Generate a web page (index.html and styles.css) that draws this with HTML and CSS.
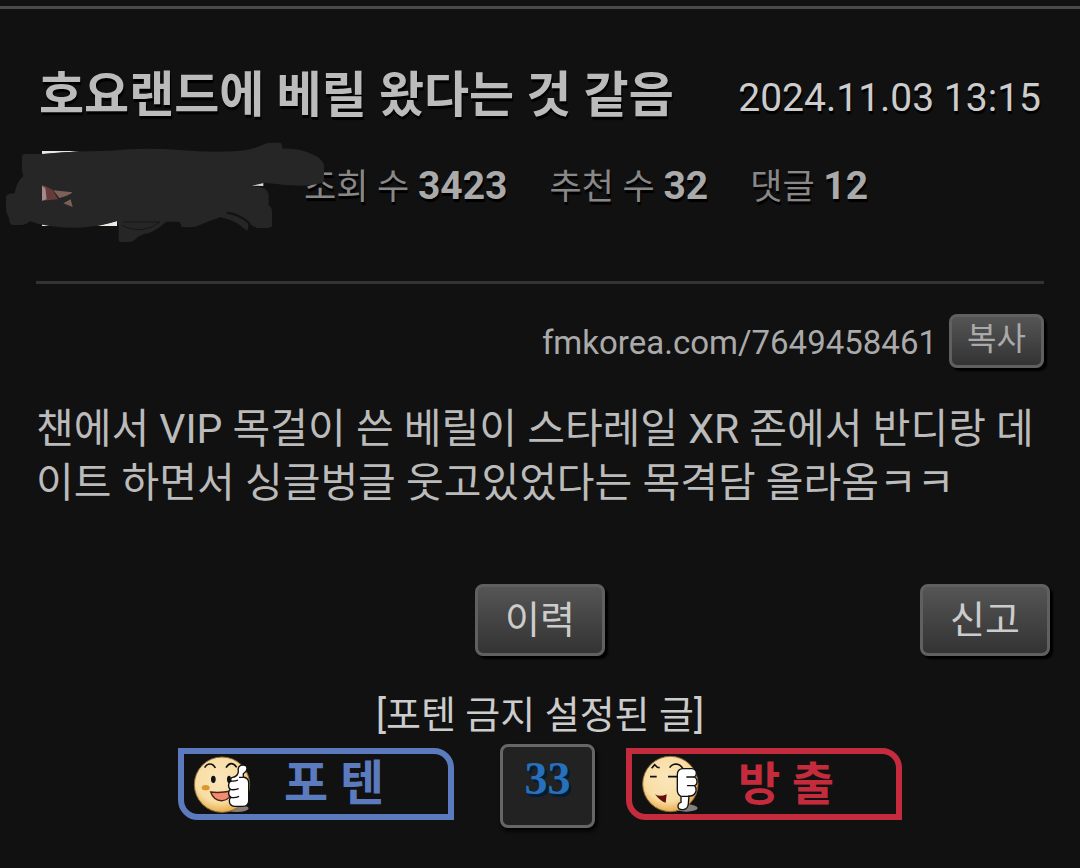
FILE: index.html
```html
<!DOCTYPE html>
<html lang="ko">
<head>
    <meta charset="UTF-8">
    <meta name="viewport" content="width=device-width, initial-scale=1.0">
    <title>호요랜드에 베릴 왔다는 것 같음</title>
    <link rel="stylesheet" href="styles.css">
</head>
<body>
    <article class="post">
        <header class="post-header">
            <div class="title-row">
                <h1>호요랜드에 베릴 왔다는 것 같음</h1>
                <time datetime="2024-11-03T13:15">2024.11.03 13:15</time>
            </div>
            <div class="meta">
                <span>조회 수 <b>3423</b></span>
                <span>추천 수 <b>32</b></span>
                <span>댓글 <b>12</b></span>
                <svg class="scribble" viewBox="0 0 1020 360" aria-hidden="true">
                    <path fill="#e4eaec" d="M126 63H240L180 69L126 73z"/>
                    <path fill="#efeae4" d="M126 283H150V288H126zM290 288L351 273V288z"/>
                    <path fill="#d8d8d8" d="M755 167L775 158H790V168z"/>
                    <path fill="#262626" d="M66 80Q66 72 76 72H126Q190 64 330 62Q430 52 540 60Q620 68 700 64Q750 62 780 48Q800 38 812 38H840Q847 38 847 56Q900 54 940 74Q966 86 972 104V156Q960 164 910 167Q850 166 795 158L755 167L790 174Q806 180 806 200V228Q816 230 816 245V288Q812 294 795 294H772Q760 290 745 278Q746 294 742 302Q730 296 720 286Q695 268 660 262Q620 276 590 289Q570 294 545 290L540 277Q515 272 498 276Q460 310 432 312L414 320Q400 336 388 336H360Q354 332 356 322V288L351 273Q310 288 240 293Q150 296 90 274Q80 284 66 285H36Q28 282 26 262Q18 250 18 235V200Q20 190 44 190Q48 158 70 138Q66 130 66 118z"/>
                    <path fill="none" stroke="#161616" stroke-width="3" d="M366 285Q385 299 425 299Q455 296 480 276H370"/>
                    <path fill="none" stroke="#131313" stroke-width="7" d="M680 248Q720 253 750 282"/>
                    <path fill="#653c3a" d="M126 164Q142 170 158 180L174 208L126 212z"/>
                    <path fill="#a08c8b" d="M126 168L136 174L140 208L126 212z"/>
                    <path fill="#7d6159" d="M160 181L218 187Q205 198 178 204zM190 220L212 208L218 231z"/>
                </svg>
            </div>
        </header>

        <div class="link-row">
            <a href="https://fmkorea.com/7649458461">fmkorea.com/7649458461</a>
            <button class="btn btn-copy" type="button">복사</button>
        </div>

        <p class="content">챈에서 VIP 목걸이 쓴 베릴이 스타레일 XR 존에서 반디랑 데이트 하면서 싱글벙글 웃고있었다는 목격담 올라옴ㅋㅋ</p>

        <div class="actions">
            <button class="btn btn-history" type="button">이력</button>
            <button class="btn btn-report" type="button">신고</button>
        </div>

        <p class="notice">[포텐 금지 설정된 글]</p>

        <div class="votes">
            <button class="vote vote-up" type="button">
                <svg viewBox="66 54 180 180" aria-hidden="true">
                    <defs>
                        <radialGradient id="skin" cx="45%" cy="40%" r="60%">
                            <stop offset="0" stop-color="#fbe6bb"/>
                            <stop offset=".7" stop-color="#f8dda3"/>
                            <stop offset="1" stop-color="#e9ae4c"/>
                        </radialGradient>
                    </defs>
                    <ellipse cx="200" cy="217" rx="36" ry="11" fill="#897b76"/>
                    <circle cx="156" cy="146" r="83" fill="url(#skin)" stroke="#8d6b37" stroke-width="3"/>
                    <path d="M104 95Q110 84 120 84Q130 84 136 96M168 95Q176 82 185 83Q194 84 200 94" fill="none" stroke="#111" stroke-width="5"/>
                    <ellipse cx="130" cy="130" rx="7" ry="11" fill="#111"/>
                    <ellipse cx="177" cy="130" rx="6" ry="11" fill="#111"/>
                    <ellipse cx="107" cy="155" rx="12" ry="8" fill="#dc982e"/>
                    <path d="M122 168Q148 172 184 165Q182 191 158 194Q132 196 122 168z" fill="#f08c72" stroke="#4d2212" stroke-width="4"/>
                    <path d="M188 124Q202 122 205 108Q202 88 217 87Q231 86 231 98Q231 105 220 113L220 123Q236 126 236 140V195Q235 211 218 211H194Q178 210 178 194Q178 188 183 184Q176 181 176 171Q176 163 181 160Q174 154 176 145Q177 137 183 135Q180 126 188 124z" fill="#fff" stroke="#111" stroke-width="4"/>
                    <path d="M182 135Q194 137 204 132M180 160Q194 163 206 158M181 184Q195 187 207 181M207 124H219" fill="none" stroke="#111" stroke-width="4"/>
                </svg>
                <span>포 텐</span>
            </button>
            <output class="count">33</output>
            <button class="vote vote-down" type="button">
                <svg viewBox="480 54 180 180" aria-hidden="true">
                    <ellipse cx="619" cy="216" rx="34" ry="11" fill="#858080"/>
                    <circle cx="571" cy="144" r="83" fill="url(#skin)" stroke="#8d6b37" stroke-width="3"/>
                    <path d="M515 97L524 86L532 94L539 95M569 95Q576 84 589 84Q602 86 608 97M510 122H530M564 122H596" fill="none" stroke="#111" stroke-width="5"/>
                    <path d="M525 175Q540 184 560 175L557 200Q542 197 525 175z" fill="#650d0c"/>
                    <path d="M607 98H635Q649 99 649 112Q649 120 643 123Q652 128 651 139Q650 147 644 149Q650 155 648 165Q645 178 632 180H627L625 203Q624 219 609 221Q593 222 594 208Q596 200 603 199V181Q592 176 592 163V116Q592 100 607 98z" fill="#fff" stroke="#111" stroke-width="4"/>
                    <path d="M619 123H643M621 149H644M604 181H628" fill="none" stroke="#111" stroke-width="4"/>
                </svg>
                <span>방 출</span>
            </button>
        </div>
    </article>
</body>
</html>
```

FILE: styles.css
```css
* {
    box-sizing: border-box;
}
body {
    margin: 0;
    padding-top: 6px;
    background: #111;
    color: #bbb;
    font-family: Roboto, "Noto Sans CJK KR", sans-serif;
}
button {
    font-family: inherit;
    cursor: pointer;
}
h1, p {
    margin: 0;
}
.post {
    border-top: 3px solid #4a4a4a;
    padding: 0 36px 40px;
}
.post-header {
    padding: 55px 0 69px;
    border-bottom: 3px solid #333;
}
.title-row {
    display: flex;
    justify-content: space-between;
    align-items: center;
    padding: 0 3px;
    text-shadow: 1px 3px 1px #000;
}
h1 {
    font-size: 49px;
    line-height: 64px;
    font-weight: bold;
}
time {
    padding-top: 4px;
    color: #ccc;
    font-size: 39px;
    line-height: 60px;
}
.meta {
    position: relative;
    display: flex;
    gap: 42px;
    margin-top: 34px;
    padding-left: 268px;
    color: #888;
    font-size: 35px;
    line-height: 48px;
    text-shadow: 1px 3px 1px #000;
}
.meta b {
    color: #aaa;
    font-size: 39px;
}
.scribble {
    position: absolute;
    left: -36px;
    top: -32px;
    width: 340px;
    height: 120px;
}
.link-row {
    display: flex;
    justify-content: flex-end;
    align-items: center;
    gap: 12px;
    margin-top: 30px;
}
.link-row a {
    padding-top: 4px;
    color: #aaa;
    font-size: 33px;
    line-height: 50px;
    text-decoration: none;
}
.btn {
    border: 3px solid #606060;
    border-radius: 8px;
    background: linear-gradient(#555, #333);
    box-shadow: 3px 3px 2px #000;
    color: #ccc;
    font-size: 38px;
    line-height: 60px;
    padding: 0;
}
.btn-copy {
    width: 95px;
    height: 54px;
    color: #aaa;
    font-size: 32px;
    line-height: 40px;
    padding-bottom: 4px;
}
.content {
    margin-top: 34px;
    font-size: 41px;
    line-height: 54px;
    word-break: break-all;
}
.actions {
    display: grid;
    grid-template-columns: 1fr 130px 1fr;
    margin: 74px -6px 0;
}
.btn-history,
.btn-report {
    width: 130px;
    height: 72px;
}
.btn-history {
    grid-column: 2;
}
.btn-report {
    justify-self: end;
}
.notice {
    margin-top: 35px;
    color: #ccc;
    font-size: 38px;
    line-height: 48px;
    text-align: center;
}
.votes {
    display: flex;
    justify-content: center;
    align-items: flex-start;
    margin-top: 5px;
}
.vote {
    display: flex;
    align-items: center;
    width: 276px;
    height: 72px;
    margin-top: 4px;
    padding: 0 0 0 8px;
    border: 6px solid;
    border-radius: 0 20px 0 20px;
    background: #111;
    font-weight: bold;
    line-height: 60px;
}
.vote svg {
    width: 60px;
    height: 60px;
}
.vote-up {
    color: #5b7bbe;
    font-size: 48px;
}
.vote-up span {
    margin-left: 32px;
}
.vote-down {
    color: #c42c3d;
    font-size: 46px;
}
.vote-down span {
    margin-left: 38px;
}
.count {
    width: 95px;
    height: 84px;
    margin: 0 31px 0 46px;
    border: 3px solid #666;
    border-radius: 8px;
    background: #222;
    box-shadow: 2px 3px 4px #000;
    color: #2671b9;
    font-family: "Liberation Serif", serif;
    font-size: 46px;
    font-weight: bold;
    line-height: 64px;
    text-align: center;
    text-shadow: 2px 3px 0 #001c3a;
}
```
